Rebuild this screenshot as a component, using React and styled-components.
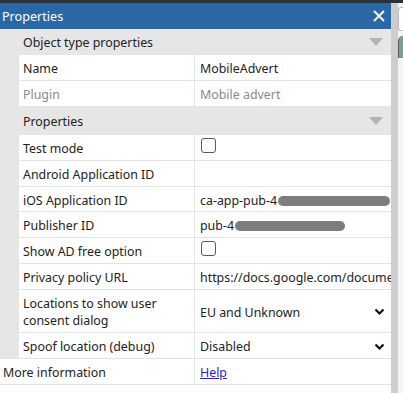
import React from "react";
import styled, { createGlobalStyle } from "styled-components";

const GlobalStyle = createGlobalStyle`
  html, body {
    margin: 0;
    padding: 0;
    background: #ffffff;
    overflow: hidden;
  }
  body {
    font-family: "Noto Sans", "Open Sans", sans-serif;
  }
`;

const TopStrip = styled.div`
  height: 3px;
  background: #2f3033;
`;

const Layout = styled.div`
  display: flex;
  height: 390px;
`;

const Panel = styled.div`
  width: 391px;
  flex-shrink: 0;
  display: flex;
  flex-direction: column;
  background: #ffffff;
`;

const Scrollbar = styled.div`
  width: 7px;
  flex-shrink: 0;
  background: #cdcdcd;
`;

const Side = styled.div`
  flex: 1;
  background: #f3f3f8;
  display: flex;
  flex-direction: column;
  gap: 5px;
  padding-top: 4px;
`;

const SideBox = styled.div`
  height: 22px;
  background: #ffffff;
  border: 1px solid #bdbdbd;
  border-right: none;
  border-radius: 3px 0 0 3px;
`;

const SideThumb = styled.div`
  height: 22px;
  background: #7f9c8c;
  border-radius: 6px 0 0 0;
  border-left: 1px solid #4e6156;
`;

const TitleBar = styled.div`
  height: 26px;
  background: #2968a5;
  color: #ffffff;
  display: flex;
  align-items: center;
  justify-content: space-between;
  padding: 0 6px 0 2px;
  font-size: 12.6px;
`;

const CloseIcon = styled.svg`
  width: 12px;
  height: 12px;
`;

const Group = styled.div`
  display: flex;
  flex-direction: column;
`;

const SectionHeader = styled.div`
  box-sizing: border-box;
  height: ${(p) => p.$h || 26}px;
  background: #e6e6e6;
  display: flex;
  align-items: center;
  justify-content: space-between;
  padding: 1px 8px 0 23px;
  font-size: 12.4px;
  color: #222;
`;

const Triangle = styled.span`
  width: 0;
  height: 0;
  border-left: 7px solid transparent;
  border-right: 7px solid transparent;
  border-top: 8px solid #b4b4b4;
  margin-bottom: 1px;
`;

const Row = styled.div`
  display: grid;
  grid-template-columns: ${(p) => (p.$flat ? "195px 1fr" : "19px 176px 1fr")};
  min-height: ${(p) => p.$h || 26}px;
  font-size: 12.4px;
  color: ${(p) => (p.$muted ? "#8a8a8a" : "#222")};
`;

const Gutter = styled.div`
  background: #e6e6e6;
`;

const Label = styled.div`
  display: flex;
  align-items: center;
  padding: 2px 0 0 ${(p) => (p.$flat ? 3 : 4)}px;
  border-bottom: 1px solid #e3e3e3;
  border-right: 1px solid #e3e3e3;
  line-height: 17px;
`;

const Value = styled.div`
  display: flex;
  align-items: center;
  padding: 2px 0 0 5px;
  border-bottom: 1px solid #e3e3e3;
  white-space: nowrap;
  overflow: hidden;
`;

const Checkbox = styled.span`
  width: 13px;
  height: 13px;
  border: 1px solid #5a5a5a;
  border-radius: 3px;
  margin-left: 1px;
  margin-bottom: 6px;
`;

const SelectBox = styled.div`
  flex: 1;
  display: flex;
  align-items: center;
  justify-content: space-between;
  padding-right: 6px;
`;

const Smudge = styled.span`
  display: inline-block;
  width: ${(p) => p.$w}px;
  height: 10px;
  background: #7d7d7d;
  border-radius: 6px;
  filter: blur(0.7px);
  margin-left: 1px;
  margin-top: 1px;
`;

const Link = styled.a`
  color: #2b1bd6;
  text-decoration: underline;
`;

const Chevron = () => (
  <svg width="11" height="8" viewBox="0 0 11 8">
    <path d="M1.5 1.5 L5.5 5.5 L9.5 1.5" fill="none" stroke="#111" strokeWidth="2.2" />
  </svg>
);

function PropRow({ label, children, muted, h }) {
  return (
    <Row $muted={muted} $h={h}>
      <Gutter />
      <Label>{label}</Label>
      <Value>{children}</Value>
    </Row>
  );
}

export default function App() {
  return (
    <>
      <GlobalStyle />
      <TopStrip />
      <Layout>
        <Panel>
          <TitleBar>
            <span>Properties</span>
            <CloseIcon viewBox="0 0 12 12">
              <path d="M1 1 L11 11 M11 1 L1 11" stroke="#fff" strokeWidth="1.8" />
            </CloseIcon>
          </TitleBar>
          <Group>
            <SectionHeader>
              <span>Object type properties</span>
              <Triangle />
            </SectionHeader>
            <PropRow label="Name">MobileAdvert</PropRow>
            <PropRow label="Plugin" muted>
              Mobile advert
            </PropRow>
            <SectionHeader $h={28}>
              <span>Properties</span>
              <Triangle />
            </SectionHeader>
            <PropRow label="Test mode">
              <Checkbox />
            </PropRow>
            <PropRow label="Android Application ID" />
            <PropRow label="iOS Application ID" h={25}>
              ca-app-pub-4<Smudge $w={112} />
            </PropRow>
            <PropRow label="Publisher ID">
              pub-4<Smudge $w={110} />
            </PropRow>
            <PropRow label="Show AD free option">
              <Checkbox />
            </PropRow>
            <PropRow label="Privacy policy URL">https://docs.google.com/document/d/1</PropRow>
            <PropRow label="Locations to show user consent dialog" h={43}>
              <SelectBox>
                <span>EU and Unknown</span>
                <Chevron />
              </SelectBox>
            </PropRow>
            <PropRow label="Spoof location (debug)">
              <SelectBox>
                <span>Disabled</span>
                <Chevron />
              </SelectBox>
            </PropRow>
          </Group>
          <Row $flat>
            <Label $flat>More information</Label>
            <Value>
              <Link href="#">Help</Link>
            </Value>
          </Row>
        </Panel>
        <Scrollbar />
        <Side>
          <SideBox />
          <SideThumb />
        </Side>
      </Layout>
    </>
  );
}
